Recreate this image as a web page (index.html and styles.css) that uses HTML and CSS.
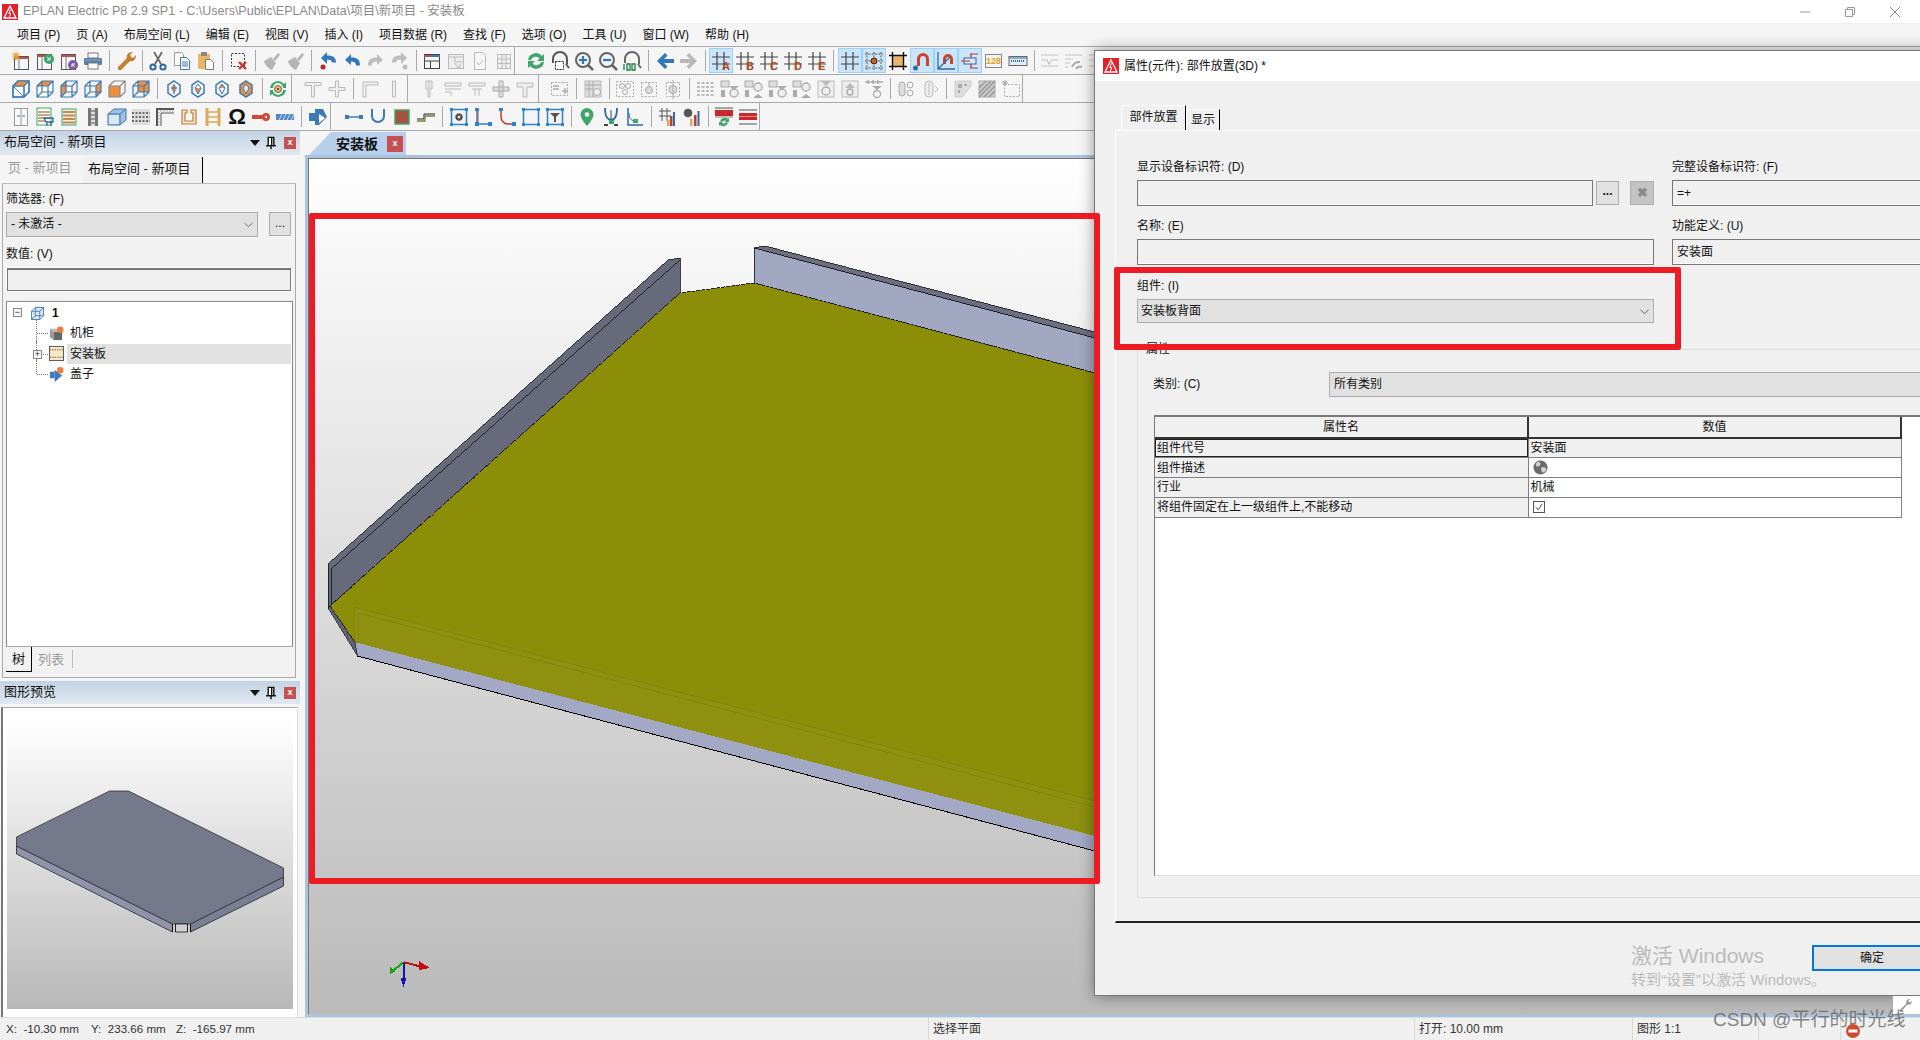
FILE: index.html
```html
<!DOCTYPE html>
<html lang="zh-CN">
<head>
<meta charset="utf-8">
<title>EPLAN Electric P8</title>
<link rel="stylesheet" href="styles.css">
</head>
<body>
<svg class="defs" aria-hidden="true">
<symbol id="eplan" viewBox="0 0 16 16"><rect width="16" height="16" fill="#e3202c"/><path d="M8 2 14 14H2Z" fill="none" stroke="#fff" stroke-width="1.3"/><path d="M8.6 5 6.8 9.5h2L7.4 13" fill="none" stroke="#fff"/></symbol>
<symbol id="nw" viewBox="0 0 20 20"><rect x="3.5" y="5.5" width="14" height="13" fill="#f4f8fc" stroke="#555"/><path d="M3 7h15" stroke="#c0504d" stroke-width="2"/><path d="M8 8v10" stroke="#777"/><path d="M5 1v8M1 5h8M2 2l6 6M8 2 2 8" stroke="#f0a030" stroke-width="1.2"/></symbol>
<symbol id="op" viewBox="0 0 20 20"><rect x="2.5" y="3.5" width="14" height="15" fill="#f4f8fc" stroke="#555"/><path d="M2 5h15" stroke="#c0504d" stroke-width="2"/><path d="M7 6v12" stroke="#777"/><circle cx="14" cy="8" r="5" fill="#3ea66b"/><path d="M12 6l3 3M15 6v3h-3" stroke="#fff" fill="none"/></symbol>
<symbol id="ps" viewBox="0 0 20 20"><rect x="2.5" y="3.5" width="14" height="15" fill="#f4f8fc" stroke="#555"/><path d="M2 5h15" stroke="#c0504d" stroke-width="2"/><path d="M7 6v12" stroke="#777"/><circle cx="14" cy="14" r="5" fill="#7d5ba6"/><path d="M16 16l-3-3M13 16v-3h3" stroke="#fff" fill="none"/></symbol>
<symbol id="pr" viewBox="0 0 20 20"><rect x="5" y="2" width="10" height="5" fill="#fff" stroke="#777"/><rect x="1" y="7" width="18" height="7" rx="1" fill="#5b7fa6"/><rect x="5" y="12" width="10" height="6" fill="#fff" stroke="#777"/><path d="M2 9h16" stroke="#89a7c8"/></symbol>
<symbol id="wr" viewBox="0 0 20 20"><path d="M2 16 11 7c-1-3 1-6 6-6l-3 3 1 2 2 1 3-3c0 5-3 7-6 6l-9 9c-2 1-4-1-3-3Z" fill="#c67f2f"/></symbol>
<symbol id="cu" viewBox="0 0 20 20"><path d="M6 1l7 12M14 1 7 13" stroke="#666" stroke-width="1.7"/><circle cx="5" cy="16" r="2.6" fill="none" stroke="#2f6aa8" stroke-width="2"/><circle cx="15" cy="16" r="2.6" fill="none" stroke="#2f6aa8" stroke-width="2"/></symbol>
<symbol id="cp" viewBox="0 0 20 20"><path d="M2.5 1.5h7l2 2v11h-9Z" fill="#fff" stroke="#999"/><path d="M8.5 6.500h6l3 3v9h-9Z" fill="#fff" stroke="#3a78b5"/><path d="M10 11h6M10 13h6M10 15h6" stroke="#3a78b5"/></symbol>
<symbol id="pa" viewBox="0 0 20 20"><rect x="2" y="3" width="12" height="15" fill="#e8b765"/><rect x="5" y="1" width="6" height="4" fill="#888"/><path d="M9.500 8.500h5l3 3v7h-8Z" fill="#fff" stroke="#777"/></symbol>
<symbol id="dl" viewBox="0 0 20 20"><rect x="2.500" y="2.500" width="13" height="13" fill="none" stroke="#333" stroke-dasharray="2 1.500"/><path d="M10 11l7 7M17 11l-7 7" stroke="#c8372b" stroke-width="2.400"/></symbol>
<symbol id="br" viewBox="0 0 20 20"><path d="M12 8 17 2l2 2-5 6ZM3 10l7-4 5 6-4 7c-3-1-7-5-8-9Z" fill="#b5b5b5"/></symbol>
<symbol id="un" viewBox="0 0 20 20"><path d="M3 9 9 3v3.500c5 0 9 1 9 8h-4c0-3-2-4-5-4V14Z" fill="#2f78bd"/></symbol>
<symbol id="und" viewBox="0 0 20 20"><path d="M3 7 9 1v3.500c5 0 9 1 9 7h-4c0-2-2-3-5-3V13Z" fill="#2f78bd"/><circle cx="5" cy="16" r="2.500" fill="#c11f2c"/></symbol>
<symbol id="re" viewBox="0 0 20 20"><path d="M17 9l-6-6v3.500c-5 0-9 1-9 8h4c0-3 2-4 5-4V14Z" fill="#bdbdbd"/></symbol>
<symbol id="red" viewBox="0 0 20 20"><path d="M17 7l-6-6v3.500c-5 0-9 1-9 7h4c0-2 2-3 5-3V13Z" fill="#bdbdbd"/><circle cx="15" cy="16" r="2.500" fill="#bdbdbd"/></symbol>
<symbol id="wl" viewBox="0 0 20 20"><rect x="2.500" y="3.500" width="15" height="14" fill="#f6f6f6" stroke="#444"/><path d="M2 5h7" stroke="#c0504d" stroke-width="2"/><path d="M9 5h9" stroke="#3a78b5" stroke-width="2"/><path d="M8.500 10v7M2 10h16" stroke="#444"/></symbol>
<symbol id="gw" viewBox="0 0 20 20"><rect x="2.500" y="3.500" width="15" height="14" fill="#eee" stroke="#bbb"/><path d="M2 6h16M9 6v5h9M8 12l6 5M14 13v4h-4" stroke="#bbb" fill="none"/></symbol>
<symbol id="gc" viewBox="0 0 20 20"><path d="M4.500 1.500h8l3 3v14h-11Z" fill="#f6f6f6" stroke="#bbb"/><path d="M7 11l2 3 4-5" stroke="#bbb" fill="none"/></symbol>
<symbol id="gt" viewBox="0 0 20 20"><rect x="3.500" y="3.500" width="13" height="14" fill="#eee" stroke="#bbb"/><path d="M3 8h13M3 12.500h13M8 4v13M12 4v13" stroke="#bbb"/></symbol>
<symbol id="rf" viewBox="0 0 20 20"><path d="M2 9a8 8 0 0 1 14-4l2-2v7h-7l2.500-2.500A5 5 0 0 0 5 9ZM18 11a8 8 0 0 1-14 4l-2 2v-7h7l-2.500 2.500A5 5 0 0 0 15 11Z" fill="#3ea66b"/></symbol>
<symbol id="zw" viewBox="0 0 20 20"><path d="M3 12V8a7 7 0 0 1 14 0v5M16 13l3 4" fill="none" stroke="#555" stroke-width="2"/><rect x="5.500" y="10.500" width="8" height="8" fill="#fff" stroke="#222" stroke-dasharray="2 1"/></symbol>
<symbol id="zp" viewBox="0 0 20 20"><circle cx="9" cy="9" r="7" fill="#eef3f8" stroke="#666" stroke-width="2"/><path d="M14 14l5 5" stroke="#666" stroke-width="2.500"/><path d="M5 9h8M9 5v8" stroke="#2f78bd" stroke-width="2.200"/></symbol>
<symbol id="zm" viewBox="0 0 20 20"><circle cx="9" cy="9" r="7" fill="#eef3f8" stroke="#666" stroke-width="2"/><path d="M14 14l5 5" stroke="#666" stroke-width="2.500"/><path d="M5 9h8" stroke="#2f78bd" stroke-width="2.200"/></symbol>
<symbol id="z1" viewBox="0 0 20 20"><path d="M3 12V8a7 7 0 0 1 14 0v5M16 13l3 4" fill="none" stroke="#666" stroke-width="2"/><path d="M2 13v6M5 13h3v6H5ZM10 13h3v6h-3Z" fill="none" stroke="#1c7c3c" stroke-width="1.300"/></symbol>
<symbol id="al" viewBox="0 0 20 20"><path d="M2 10 10 2l2.500 2.500L9 8h10v4H9l3.500 3.500L10 18Z" fill="#2f78bd"/></symbol>
<symbol id="ar" viewBox="0 0 20 20"><path d="M18 10 10 2 7.500 4.500 11 8H1v4h10l-3.500 3.500L10 18Z" fill="#b9b9b9"/></symbol>
<symbol id="gd" viewBox="0 0 20 20"><path d="M6 1v18M13 1v18M1 6h18M1 13h18" stroke="#444" stroke-width="1.200"/></symbol>
<symbol id="gdo" viewBox="0 0 20 20"><path d="M3 1v18M10 1v18M17 1v18M1 3h18M1 10h18M1 17h18" stroke="#555" stroke-dasharray="2 1.300"/><circle cx="10" cy="10" r="3" fill="#e25a15" stroke="#222"/></symbol>
<symbol id="crop" viewBox="0 0 20 20"><rect x="5" y="5" width="10" height="10" fill="#e8b765"/><path d="M4.500 1v18M15.500 1v18M1 4.500h18M1 15.500h18" stroke="#111" stroke-width="1.400"/></symbol>
<symbol id="mg1" viewBox="0 0 20 20"><path d="M5 15V8a6 6 0 0 1 12 0v7h-3V8a3 3 0 0 0-6 0v7Z" fill="#c8452a"/><circle cx="3.500" cy="17" r="2.500" fill="#2f6aa8"/></symbol>
<symbol id="mg2" viewBox="0 0 20 20"><path d="M7 13V8a5 5 0 0 1 10 0v5h-3V8a2 2 0 0 0-4 0v5Z" fill="#c8452a"/><path d="M2 1v17h17M2 18 14 6" fill="none" stroke="#2f6aa8" stroke-width="1.300"/></symbol>
<symbol id="mg3" viewBox="0 0 20 20"><rect x="4" y="7" width="12" height="6" fill="#dbe9f5" stroke="#2f6aa8"/><path d="M16 3h-5v4M16 17h-5v-4M10 10H1M18 3v0M10 3h8M10 17h8" fill="none" stroke="#b3362c" stroke-width="1.200"/></symbol>
<symbol id="rl" viewBox="0 0 20 20"><rect x="1" y="5.500" width="18" height="9" fill="#e4eefa" stroke="#666"/><path d="M3 10h14" stroke="#2f6aa8" stroke-width="2" stroke-dasharray="1 1"/><path d="M1 7h18" stroke="#2f6aa8"/></symbol>
<symbol id="lg1" viewBox="0 0 20 20"><path d="M1 4h17M1 15h17M1 9h6l2 4 3-4h6" fill="none" stroke="#c4c4c4" stroke-width="1.200"/></symbol>
<symbol id="lg2" viewBox="0 0 20 20"><path d="M1 4h17M1 8h8M1 12h5M1 16h3" stroke="#c4c4c4" stroke-width="1.200"/><path d="M8 16a8 8 0 0 1 8-5M12 18a5 5 0 0 1 6-2" fill="none" stroke="#aaa" stroke-width="2"/></symbol>
<symbol id="c1" viewBox="0 0 20 20"><path d="M2 7 7 2h11v11l-5 5H2Z" fill="#fff" stroke="#3d7ab8" stroke-width="1.300"/><path d="M2 7h11v11ZM13 7l5-5" fill="none" stroke="#3d7ab8"/><path d="M2 7 7 2h11l-5 5Z" fill="#ef8f3e"/><path d="M2 7 7 2h11v11l-5 5H2ZM2 7h11v11M13 7l5-5" fill="none" stroke="#3d7ab8" stroke-width="1.200"/></symbol>
<symbol id="c2" viewBox="0 0 20 20"><path d="M2 7h11v11H2Z" fill="#dbe9f5"/><path d="M7 2h11v11H7Z" fill="#dbe9f5"/><path d="M2 7 7 2h11v11l-5 5H2ZM2 7h11v11M13 7l5-5M7 2v11h11M7 13l-5 5" fill="none" stroke="#3d7ab8" stroke-width="1.200"/></symbol>
<symbol id="c2o" viewBox="0 0 20 20"><path d="M2 7h11v11H2Z" fill="#fff"/><path d="M7 2h11v11H7Z" fill="#fff"/><path d="M7 2h11l-5 5H2Z" fill="#ef8f3e"/><path d="M2 7 7 2h11v11l-5 5H2ZM2 7h11v11M13 7l5-5M7 2v11h11M7 13l-5 5" fill="none" stroke="#3d7ab8" stroke-width="1.200"/></symbol>
<symbol id="c3" viewBox="0 0 20 20"><path d="M2 7 7 2v11l-5 5Z" fill="#ef8f3e"/><path d="M2 7 7 2h11v11l-5 5H2ZM2 7h11v11M13 7l5-5M7 2v11h11M7 13l-5 5" fill="none" stroke="#3d7ab8" stroke-width="1.200"/></symbol>
<symbol id="c4" viewBox="0 0 20 20"><path d="M13 7l5-5v11l-5 5Z" fill="#ef8f3e"/><path d="M2 7 7 2h11v11l-5 5H2ZM2 7h11v11M13 7l5-5M7 2v11h11M7 13l-5 5" fill="none" stroke="#3d7ab8" stroke-width="1.200"/></symbol>
<symbol id="c5" viewBox="0 0 20 20"><path d="M2 7h11v11H2Z" fill="#ef8f3e"/><path d="M2 7 7 2h11v11l-5 5H2ZM2 7h11v11M13 7l5-5" fill="none" stroke="#888" stroke-width="1.200"/></symbol>
<symbol id="c6" viewBox="0 0 20 20"><path d="M7 2h11v11H7Z" fill="#ef8f3e"/><path d="M2 7 7 2h11v11l-5 5H2ZM2 7h11v11M13 7l5-5M7 2v11h11M7 13l-5 5" fill="none" stroke="#3d7ab8" stroke-width="1.200"/></symbol>
<symbol id="h1" viewBox="0 0 20 20"><path d="M10 2l6 4v8l-6 4-6-4V6Z" fill="#f0f5fa" stroke="#3d7ab8" stroke-width="1.500"/><path d="M10 5l3 4-3 6-3-6Z" fill="#ef8f3e"/><path d="M7 9h6M10 5v10" stroke="#3d7ab8"/></symbol>
<symbol id="h2" viewBox="0 0 20 20"><path d="M10 2l6 4v8l-6 4-6-4V6Z" fill="#f0f5fa" stroke="#3d7ab8" stroke-width="1.500"/><path d="M7 9h6l-3 6Z" fill="#ef8f3e"/><path d="M10 5l3 4-3 6-3-6Z" fill="none" stroke="#3d7ab8"/></symbol>
<symbol id="h3" viewBox="0 0 20 20"><path d="M10 2l6 4v8l-6 4-6-4V6Z" fill="#f0f5fa" stroke="#3d7ab8" stroke-width="1.500"/><path d="M10 5l3 4h-6Z" fill="#ef8f3e"/><path d="M10 5l3 4-3 6-3-6Z" fill="none" stroke="#3d7ab8"/></symbol>
<symbol id="h4" viewBox="0 0 20 20"><path d="M10 2l6 4v8l-6 4-6-4V6Z" fill="#ef8f3e" stroke="#3d7ab8" stroke-width="1.500"/><path d="M10 5l3 4-3 6-3-6Z" fill="#dbe9f5" stroke="#3d7ab8"/></symbol>
<symbol id="rfe" viewBox="0 0 20 20"><path d="M2 9a8 8 0 0 1 14-4l2-2v6h-3a5 5 0 0 0-10 0ZM18 11a8 8 0 0 1-14 4l-2 2v-6h3a5 5 0 0 0 10 0Z" fill="#3ea66b"/><circle cx="10" cy="10" r="3.500" fill="#e8b765" stroke="#666"/><circle cx="10" cy="10" r="1" fill="#333"/></symbol>
<symbol id="gT" viewBox="0 0 20 20"><path d="M2 3.500h16v3h-6.500V18h-3V6.500H2Z" fill="#eee" stroke="#bbb"/></symbol>
<symbol id="gP" viewBox="0 0 20 20"><path d="M8.500 2h3v6.500H18v3h-6.500V18h-3v-6.500H2v-3h6.500Z" fill="#eee" stroke="#bbb"/></symbol>
<symbol id="gL" viewBox="0 0 20 20"><path d="M3 18V3h15v3H6v12Z" fill="#eee" stroke="#bbb"/></symbol>
<symbol id="gI" viewBox="0 0 20 20"><path d="M8.500 2h3v16h-3Z" fill="#eee" stroke="#bbb"/></symbol>
<symbol id="gY" viewBox="0 0 20 20"><path d="M7 2h6v8h-2v8H9v-8H7ZM10 2v8" fill="#eee" stroke="#bbb"/></symbol>
<symbol id="gE" viewBox="0 0 20 20"><path d="M2 4h16v3H2ZM2 10h16" fill="#eee" stroke="#bbb"/><path d="M2 13h6v4" fill="none" stroke="#bbb"/></symbol>
<symbol id="gF" viewBox="0 0 20 20"><path d="M2 4h16v3H2ZM5 10h10M8 10v7M12 10v7" fill="#eee" stroke="#bbb"/></symbol>
<symbol id="gH" viewBox="0 0 20 20"><path d="M2 8h16v4H2ZM8 2h4v16H8Z" fill="#ddd" stroke="#aaa"/></symbol>
<symbol id="gU" viewBox="0 0 20 20"><path d="M2 4h16v4h-6v10H8V8H2Z" fill="#eee" stroke="#bbb"/></symbol>
<symbol id="dA" viewBox="0 0 20 20"><rect x="1.500" y="3.500" width="16" height="13" fill="none" stroke="#aaa" stroke-dasharray="2 1.500"/><path d="M3 7h6M3 10h6M12 12h6M15 9v6" stroke="#aaa" stroke-width="1.500"/></symbol>
<symbol id="dB" viewBox="0 0 20 20"><rect x="2" y="2" width="16" height="16" fill="#ddd" stroke="#bbb"/><path d="M2 6h16M6 2v16M10 2v16M2 10h8" stroke="#aaa"/><circle cx="14" cy="13" r="3.500" fill="#eee" stroke="#aaa"/></symbol>
<symbol id="dC" viewBox="0 0 20 20"><rect x="1.500" y="2.500" width="17" height="15" fill="none" stroke="#aaa" stroke-dasharray="2 1.500"/><circle cx="7" cy="7" r="2.500" fill="none" stroke="#aaa"/><circle cx="13" cy="7" r="2.500" fill="none" stroke="#aaa"/><circle cx="10" cy="13" r="2.500" fill="none" stroke="#aaa"/></symbol>
<symbol id="dD" viewBox="0 0 20 20"><rect x="2.500" y="3.500" width="15" height="14" fill="none" stroke="#aaa" stroke-dasharray="2 1.500"/><circle cx="10" cy="11" r="3.500" fill="#ddd" stroke="#aaa"/><path d="M10 3v4" stroke="#aaa"/></symbol>
<symbol id="dE" viewBox="0 0 20 20"><rect x="3.500" y="3.500" width="13" height="14" fill="none" stroke="#aaa" stroke-dasharray="2 1.500"/><circle cx="10" cy="10.500" r="4" fill="#ddd" stroke="#aaa"/><path d="M10 1v19" stroke="#aaa"/></symbol>
<symbol id="eA" viewBox="0 0 20 20"><path d="M1 4h18M1 16h18M1 8h18M1 12h18" stroke="#aaa" stroke-dasharray="3 1.500" stroke-width="1.500"/></symbol>
<symbol id="eB" viewBox="0 0 20 20"><rect x="1" y="2" width="8" height="6" fill="#ddd" stroke="#aaa"/><path d="M9 7h10l-5 4ZM1 11h4v7H1Z" fill="#aaa"/><circle cx="14" cy="14" r="4" fill="#eee" stroke="#aaa" stroke-width="1.300"/></symbol>
<symbol id="eC" viewBox="0 0 20 20"><rect x="1" y="2" width="8" height="6" fill="#ddd" stroke="#aaa"/><path d="M1 11h4v7H1ZM9 19l5-4 5 4Z" fill="#aaa"/><circle cx="14" cy="8" r="4" fill="#eee" stroke="#aaa" stroke-width="1.300"/></symbol>
<symbol id="eD" viewBox="0 0 20 20"><rect x="2" y="2" width="16" height="16" fill="#eee" stroke="#bbb"/><path d="M5 2l5 5 5-5Z" fill="#bbb"/><circle cx="10" cy="12" r="4" fill="none" stroke="#aaa" stroke-width="1.300"/></symbol>
<symbol id="eE" viewBox="0 0 20 20"><rect x="2" y="2" width="16" height="16" fill="#eee" stroke="#bbb"/><path d="M5 9l5-5 5 5Z" fill="#bbb"/><circle cx="10" cy="13" r="3" fill="none" stroke="#aaa" stroke-width="1.300"/></symbol>
<symbol id="eF" viewBox="0 0 20 20"><path d="M1 3h18M4 1v4M9 1v4M14 1v4" stroke="#aaa" stroke-width="1.500"/><path d="M8 7h10l-5 4Z" fill="#aaa"/><circle cx="13" cy="15" r="3.500" fill="none" stroke="#aaa" stroke-width="1.300"/></symbol>
<symbol id="fA" viewBox="0 0 20 20"><rect x="3" y="3" width="6" height="14" rx="3" fill="#ddd" stroke="#aaa"/><circle cx="14" cy="6" r="3" fill="none" stroke="#aaa"/><circle cx="14" cy="14" r="3" fill="none" stroke="#aaa"/></symbol>
<symbol id="fB" viewBox="0 0 20 20"><rect x="5" y="2" width="8" height="16" rx="4" fill="#eee" stroke="#bbb"/><path d="M9 4v12M15 7l3 3-3 3" fill="none" stroke="#bbb"/></symbol>
<symbol id="sA" viewBox="0 0 20 20"><path d="M2 2h16v5l-9 11H2Z" fill="#ddd" stroke="#ccc"/><path d="M5 5h4v4H5ZM11 5h3v2h-3ZM5 11h2v3H5Z" fill="#aaa"/></symbol>
<symbol id="sB" viewBox="0 0 20 20"><rect x="2" y="2" width="16" height="16" fill="#ccc" stroke="#aaa"/><path d="M2 9l7-7M2 14 14 2M2 18 18 2M7 18 18 7M12 18l6-6" stroke="#999" stroke-width="1.500"/></symbol>
<symbol id="sC" viewBox="0 0 20 20"><rect x="3.500" y="5.500" width="15" height="12" fill="none" stroke="#aaa" stroke-dasharray="2 1.500"/><path d="M4 1v6M1 4h6M2 2l4 4M6 2 2 6" stroke="#aaa"/></symbol>
<symbol id="ca" viewBox="0 0 20 20"><rect x="3.500" y="1.500" width="13" height="17" fill="#f8f8f8" stroke="#999"/><path d="M10 2v16" stroke="#999"/><path d="M6 9h3M11 9h3" stroke="#2f6aa8"/></symbol>
<symbol id="rc" viewBox="0 0 20 20"><rect x="2" y="1" width="14" height="17" fill="#fff" stroke="#3ea66b"/><path d="M3 5h12M3 8h12M3 11h12M3 14h7" stroke="#b48a57" stroke-width="1.500"/><path d="M9 11h9v4h-7ZM12 15v4M16 15v4" fill="none" stroke="#2f6aa8" stroke-width="1.300"/></symbol>
<symbol id="ro" viewBox="0 0 20 20"><rect x="3" y="2" width="14" height="16" fill="#eee" stroke="#3ea66b"/><path d="M4 5h12M4 8.500h12M4 12h12M4 15.500h12" stroke="#c8894a" stroke-width="1.800"/></symbol>
<symbol id="rr" viewBox="0 0 20 20"><rect x="5" y="1" width="10" height="18" fill="#777"/><rect x="8" y="1" width="4" height="18" fill="#ddd"/><path d="M8 4h4M8 8h4M8 12h4M8 16h4" stroke="#555"/></symbol>
<symbol id="b3" viewBox="0 0 20 20"><path d="M1 7l6-5h12v11l-6 5H1Z" fill="#9fc0e0" stroke="#3d7ab8"/><path d="M1 7h12v11M13 7l6-5" fill="none" stroke="#3d7ab8"/><path d="M2 8h10v9H2Z" fill="#dbe9f5"/></symbol>
<symbol id="dg" viewBox="0 0 20 20"><rect x="1" y="2" width="18" height="16" fill="#ddd"/><path d="M1 6h18M1 10h18M1 14h18" stroke="#444" stroke-width="1.500" stroke-dasharray="2 1.500"/></symbol>
<symbol id="cn" viewBox="0 0 20 20"><path d="M2 19V2h17" fill="none" stroke="#555" stroke-width="2"/><path d="M6 19V6h13" fill="none" stroke="#555" stroke-width="1"/><path d="M4 5v14M5 4h14" stroke="#999" stroke-dasharray="1.500 1.500"/></symbol>
<symbol id="uo" viewBox="0 0 20 20"><path d="M3 3h5v3H6v8h8V6h-2V3h5v14H3Z" fill="#f2e3cc" stroke="#b5803f" stroke-width="1.200"/></symbol>
<symbol id="ld" viewBox="0 0 20 20"><path d="M4 1v18M16 1v18" stroke="#dcab58" stroke-width="3"/><path d="M5 5h10M5 10h10M5 15h10" stroke="#dcab58" stroke-width="1.500"/></symbol>
<symbol id="pn" viewBox="0 0 20 20"><path d="M1 8h11v4H1Z" fill="#d04a2f"/><circle cx="15" cy="10" r="4" fill="#d04a2f"/><circle cx="15" cy="10" r="1.200" fill="#fff"/></symbol>
<symbol id="br2" viewBox="0 0 20 20"><rect x="1" y="7" width="18" height="6" fill="#4f8ac7"/><path d="M4 13l3-6M8 13l3-6M12 13l3-6M16 13l3-6" stroke="#cfe0f2"/></symbol>
<symbol id="bs" viewBox="0 0 20 20"><path d="M1 6h6v8H1Z" fill="#3d7ab8"/><path d="M7 2h8l4 8-8 8H7Z" fill="#3d7ab8"/><path d="M11 7l6 4-6 5Z" fill="#fff"/></symbol>
<symbol id="ln" viewBox="0 0 20 20"><path d="M3 10h14" stroke="#3d7ab8" stroke-width="1.500"/><rect x="1" y="8" width="4" height="4" fill="#3d7ab8"/><rect x="15" y="8" width="4" height="4" fill="#3d7ab8"/></symbol>
<symbol id="uu" viewBox="0 0 20 20"><path d="M4 2v7a6 6 0 0 0 12 0V2" fill="none" stroke="#3d7ab8" stroke-width="2"/></symbol>
<symbol id="sq" viewBox="0 0 20 20"><rect x="3" y="3" width="14" height="14" fill="#a8513f" stroke="#3ea66b" stroke-width="1.500"/></symbol>
<symbol id="zz" viewBox="0 0 20 20"><path d="M1 12h7V7h11" fill="none" stroke="#222"/><path d="M1 14h8V9h10" fill="none" stroke="#79803a" stroke-width="1.300"/></symbol>
<symbol id="fg" viewBox="0 0 20 20"><rect x="2.500" y="2.500" width="15" height="15" fill="#f2f2f2" stroke="#2f82cc" stroke-width="1.500"/><path d="M1 1h3v3H1ZM16 1h3v3h-3ZM1 16h3v3H1ZM16 16h3v3h-3Z" fill="#2f82cc"/><circle cx="10" cy="10" r="3.500" fill="#555" stroke="#555" stroke-dasharray="1 1"/><circle cx="10" cy="10" r="1.200" fill="#f2f2f2"/></symbol>
<symbol id="fL" viewBox="0 0 20 20"><path d="M4 2v15h14" fill="none" stroke="#2f82cc" stroke-width="1.500"/><path d="M5 2v14" stroke="#c8372b"/><path d="M2 1h4v3H2ZM2 15h4v4H2ZM15 15h4v4h-4Z" fill="#2f82cc"/></symbol>
<symbol id="fC" viewBox="0 0 20 20"><path d="M4 2v8a7 7 0 0 0 7 7h7" fill="none" stroke="#c8372b" stroke-width="1.500"/><path d="M2 1h4v3H2ZM15 15h4v4h-4Z" fill="#2f82cc"/></symbol>
<symbol id="fR" viewBox="0 0 20 20"><rect x="2.500" y="2.500" width="15" height="15" fill="none" stroke="#2f82cc" stroke-width="1.500"/><path d="M1 1h3v3H1ZM16 1h3v3h-3ZM1 16h3v3H1ZM16 16h3v3h-3Z" fill="#2f82cc"/></symbol>
<symbol id="fF" viewBox="0 0 20 20"><rect x="2.500" y="2.500" width="15" height="15" fill="#f2f2f2" stroke="#2f82cc" stroke-width="1.500"/><path d="M1 1h3v3H1ZM16 1h3v3h-3ZM1 16h3v3H1ZM16 16h3v3h-3Z" fill="#2f82cc"/><path d="M5 6h10l-4 4v5H9v-5Z" fill="#555"/></symbol>
<symbol id="gp" viewBox="0 0 20 20"><path d="M10 1a6.500 6.500 0 0 1 6.500 6.500C16.500 12 10 19 10 19S3.500 12 3.500 7.500A6.500 6.500 0 0 1 10 1Z" fill="#3ea66b"/><circle cx="10" cy="7.500" r="2.300" fill="#fff"/></symbol>
<symbol id="vv" viewBox="0 0 20 20"><path d="M4 1c0 9 3 12 6 12s6-3 6-12" fill="none" stroke="#2f6aa8" stroke-width="1.800"/><path d="M10 3v9" stroke="#444"/><path d="M3 18h4M13 18h4" stroke="#444" stroke-width="2"/><rect x="8" y="13" width="5" height="4" fill="#3ea66b"/></symbol>
<symbol id="ll" viewBox="0 0 20 20"><path d="M3 1v17h15" fill="none" stroke="#2f6aa8" stroke-width="1.500"/><path d="M4 6c0 6 3 8 6 8" fill="none" stroke="#2f6aa8"/><rect x="8" y="12" width="5" height="4" fill="#3ea66b"/></symbol>
<symbol id="gb" viewBox="0 0 20 20"><path d="M4 1v13M9 1v13M1 4h12M1 9h12" stroke="#555"/><path d="M12 19V9h2.500v10Z" fill="#c8372b"/><path d="M15 19V5h2v14Z" fill="#2f6aa8"/><path d="M9 19v-6h2.500v6Z" fill="#dcab58"/></symbol>
<symbol id="gG" viewBox="0 0 20 20"><circle cx="6" cy="6" r="4" fill="#555" stroke="#555" stroke-dasharray="1 1"/><path d="M12 19V8h2.500v11Z" fill="#c8372b"/><path d="M15.500 19V4h2v15Z" fill="#2f6aa8"/><path d="M8 19v-7h2.500v7Z" fill="#dcab58"/></symbol>
<symbol id="rb" viewBox="0 0 20 20"><path d="M1 1h18" stroke="#555"/><path d="M1 3h18v6H1Z" fill="#c8272c"/><path d="M1 10h18" stroke="#888"/><path d="M6 14a5 5 0 0 1 8-2l1-1v4h-4l1-1a3 3 0 0 0-4 1ZM14 16a5 5 0 0 1-8 2l-1 1v-4h4l-1 1a3 3 0 0 0 4-1Z" fill="#3ea66b"/></symbol>
<symbol id="rc2" viewBox="0 0 20 20"><path d="M1 3h18M1 17h18" stroke="#555" stroke-width="1.200"/><path d="M1 6h18v7H1Z" fill="#c8272c"/><path d="M1 9.500h18" stroke="#e88"/></symbol>
<symbol id="pl" viewBox="0 0 20 20"><path d="M6 2h8v12H6ZM3 14h14M10 14v5M11 3v10" fill="#fff" stroke="#111" stroke-width="2"/></symbol>
<symbol id="globe" viewBox="0 0 16 16"><circle cx="8" cy="8" r="7.500" fill="#6c6c6c"/><path d="M5 2c3 0 4 2 2 4S3 7 3 4ZM9 8c3-1 5 0 5 2s-3 4-4 3-2-4-1-5Z" fill="#d4d4d4"/></symbol>
</svg>

<div class="app">
  <header class="titlebar">
    <svg class="title-icon"><use href="#eplan"/></svg>
    <span class="title-text">EPLAN Electric P8 2.9 SP1 - C:\Users\Public\EPLAN\Data\项目\新项目 - 安装板</span>
    <div class="win-btns">
      <span class="win-btn"><svg viewBox="0 0 10 10"><path d="M0 5h10" stroke="#999"/></svg></span>
      <span class="win-btn"><svg viewBox="0 0 10 10"><path d="M.5 2.500h7v7h-7ZM2.500 2.500v-2h7v7h-2" fill="none" stroke="#999"/></svg></span>
      <span class="win-btn"><svg viewBox="0 0 10 10"><path d="M0 0l10 10M10 0 0 10" stroke="#888"/></svg></span>
    </div>
  </header>
  <nav class="menubar">
    <span>项目 (P)</span><span>页 (A)</span><span>布局空间 (L)</span><span>编辑 (E)</span><span>视图 (V)</span><span>插入 (I)</span><span>项目数据 (R)</span><span>查找 (F)</span><span>选项 (O)</span><span>工具 (U)</span><span>窗口 (W)</span><span>帮助 (H)</span>
  </nav>
  <div class="toolbars">
    <div class="tbrow">
      <div class="tbg first">
        <i class="b"><svg><use href="#nw"/></svg></i><i class="b"><svg><use href="#op"/></svg></i><i class="b"><svg><use href="#ps"/></svg></i><i class="b"><svg><use href="#pr"/></svg></i><u class="s"></u>
        <i class="b"><svg><use href="#wr"/></svg></i><u class="s"></u>
        <i class="b"><svg><use href="#cu"/></svg></i><i class="b"><svg><use href="#cp"/></svg></i><i class="b"><svg><use href="#pa"/></svg></i><u class="s"></u>
        <i class="b"><svg><use href="#dl"/></svg></i><u class="s"></u>
        <i class="b"><svg><use href="#br"/></svg></i><i class="b"><svg><use href="#br"/></svg></i><u class="s"></u>
        <i class="b"><svg><use href="#und"/></svg></i><i class="b"><svg><use href="#un"/></svg></i><i class="b"><svg><use href="#re"/></svg></i><i class="b"><svg><use href="#red"/></svg></i><u class="s"></u>
        <i class="b"><svg><use href="#wl"/></svg></i><i class="b"><svg><use href="#gw"/></svg></i><i class="b"><svg><use href="#gc"/></svg></i><i class="b"><svg><use href="#gt"/></svg></i>
      </div>
      <div class="tbg last">
        <i class="b"><svg><use href="#rf"/></svg></i><i class="b"><svg><use href="#zw"/></svg></i><i class="b"><svg><use href="#zp"/></svg></i><i class="b"><svg><use href="#zm"/></svg></i><i class="b"><svg><use href="#z1"/></svg></i><u class="s"></u>
        <i class="b"><svg><use href="#al"/></svg></i><i class="b"><svg><use href="#ar"/></svg></i><u class="s"></u>
        <i class="b on"><svg><use href="#gd"/><text x="11" y="19" class="gl">A</text></svg></i><i class="b"><svg><use href="#gd"/><text x="11" y="19" class="gl">B</text></svg></i><i class="b"><svg><use href="#gd"/><text x="11" y="19" class="gl">C</text></svg></i><i class="b"><svg><use href="#gd"/><text x="11" y="19" class="gl">D</text></svg></i><i class="b"><svg><use href="#gd"/><text x="11" y="19" class="gl">E</text></svg></i><u class="s"></u>
        <i class="b on"><svg><use href="#gd"/></svg></i><i class="b on"><svg><use href="#gdo"/></svg></i><i class="b"><svg><use href="#crop"/></svg></i>
        <i class="b on"><svg><use href="#mg1"/></svg></i><i class="b on"><svg><use href="#mg2"/></svg></i><i class="b on"><svg><use href="#mg3"/></svg></i>
        <i class="b"><em class="n128">128</em></i><i class="b"><svg><use href="#rl"/></svg></i><u class="s"></u>
        <i class="b"><svg><use href="#lg1"/></svg></i><i class="b"><svg><use href="#lg2"/></svg></i><i class="b"><svg><use href="#lg1"/></svg></i>
      </div>
    </div>
    <div class="tbrow">
      <div class="tbg first w292">
        <i class="b"><svg><use href="#c1"/></svg></i><i class="b"><svg><use href="#c2o"/></svg></i><i class="b"><svg><use href="#c3"/></svg></i><i class="b"><svg><use href="#c4"/></svg></i><i class="b"><svg><use href="#c5"/></svg></i><i class="b"><svg><use href="#c6"/></svg></i><u class="s"></u>
        <i class="b"><svg><use href="#h1"/></svg></i><i class="b"><svg><use href="#h2"/></svg></i><i class="b"><svg><use href="#h3"/></svg></i><i class="b"><svg><use href="#h4"/></svg></i><u class="s"></u>
        <i class="b"><svg><use href="#rfe"/></svg></i>
      </div>
      <div class="tbg w116">
        <i class="b"><svg><use href="#gT"/></svg></i><i class="b"><svg><use href="#gP"/></svg></i><u class="s"></u><i class="b"><svg><use href="#gL"/></svg></i><i class="b"><svg><use href="#gI"/></svg></i>
      </div>
      <div class="tbg w131">
        <i class="b"><svg><use href="#gY"/></svg></i><i class="b"><svg><use href="#gE"/></svg></i><i class="b"><svg><use href="#gF"/></svg></i><i class="b"><svg><use href="#gH"/></svg></i><i class="b"><svg><use href="#gU"/></svg></i>
      </div>
      <div class="tbg w484">
        <i class="b"><svg><use href="#dA"/></svg></i><u class="s"></u><i class="b"><svg><use href="#dB"/></svg></i><u class="s"></u>
        <i class="b"><svg><use href="#dC"/></svg></i><i class="b"><svg><use href="#dD"/></svg></i><i class="b"><svg><use href="#dE"/></svg></i><u class="s"></u>
        <i class="b"><svg><use href="#eA"/></svg></i><i class="b"><svg><use href="#eB"/></svg></i><i class="b"><svg><use href="#eC"/></svg></i><i class="b"><svg><use href="#eB"/></svg></i><i class="b"><svg><use href="#eC"/></svg></i><i class="b"><svg><use href="#eD"/></svg></i><i class="b"><svg><use href="#eE"/></svg></i><i class="b"><svg><use href="#eF"/></svg></i><u class="s"></u>
        <i class="b"><svg><use href="#fA"/></svg></i><i class="b"><svg><use href="#fB"/></svg></i><u class="s"></u>
        <i class="b"><svg><use href="#sA"/></svg></i><i class="b"><svg><use href="#sB"/></svg></i><i class="b"><svg><use href="#sC"/></svg></i>
      </div>
    </div>
    <div class="tbrow">
      <div class="tbg first w331">
        <i class="b"><svg><use href="#ca"/></svg></i><i class="b"><svg><use href="#rc"/></svg></i><i class="b"><svg><use href="#ro"/></svg></i><i class="b"><svg><use href="#rr"/></svg></i><i class="b"><svg><use href="#b3"/></svg></i><i class="b"><svg><use href="#dg"/></svg></i><i class="b"><svg><use href="#cn"/></svg></i><i class="b"><svg><use href="#uo"/></svg></i><i class="b"><svg><use href="#ld"/></svg></i><i class="b omega">Ω</i><i class="b"><svg><use href="#pn"/></svg></i><i class="b"><svg><use href="#br2"/></svg></i><u class="s"></u>
        <i class="b"><svg><use href="#bs"/></svg></i>
      </div>
      <div class="tbg w429">
        <i class="b"><svg><use href="#ln"/></svg></i><i class="b"><svg><use href="#uu"/></svg></i><i class="b"><svg><use href="#sq"/></svg></i><i class="b"><svg><use href="#zz"/></svg></i><u class="s"></u>
        <i class="b"><svg><use href="#fg"/></svg></i><i class="b"><svg><use href="#fL"/></svg></i><i class="b"><svg><use href="#fC"/></svg></i><i class="b"><svg><use href="#fR"/></svg></i><i class="b"><svg><use href="#fF"/></svg></i><u class="s"></u>
        <i class="b"><svg><use href="#gp"/></svg></i><i class="b"><svg><use href="#vv"/></svg></i><i class="b"><svg><use href="#ll"/></svg></i><u class="s"></u>
        <i class="b"><svg><use href="#gb"/></svg></i><i class="b"><svg><use href="#gG"/></svg></i><u class="s"></u>
        <i class="b"><svg><use href="#rb"/></svg></i><i class="b"><svg><use href="#rc2"/></svg></i>
      </div>
    </div>
  </div>

  <main class="workspace">
    <aside class="sidebar">
      <div class="caption">
        <span class="cap-title">布局空间 - 新项目</span>
        <b class="cap-arrow"></b><svg class="cap-pin"><use href="#pl"/></svg><b class="cap-close">x</b>
      </div>
      <div class="side-tabs">
        <span class="side-tab dim">页 - 新项目</span>
        <span class="side-tab cur">布局空间 - 新项目</span>
      </div>
      <div class="side-body">
        <label class="lbl">筛选器: (F)</label>
        <div class="filter-row">
          <div class="combo">- 未激活 -<svg class="chev" viewBox="0 0 10 6"><path d="M.5.500 5 5 9.500.5" fill="none" stroke="#666"/></svg></div>
          <div class="dots">...</div>
        </div>
        <label class="lbl val">数值: (V)</label>
        <div class="value-input"></div>
        <div class="tree">
          <div class="node root"><span class="exp">−</span><svg class="ticon"><use href="#c2"/></svg><b>1</b></div>
          <div class="node"><span class="conn"></span><svg class="ticon" viewBox="0 0 16 16"><path d="M1 3l4 3v9L1 12Z" fill="#999"/><path d="M5 6h9v9H5Z" fill="#666"/><path d="M1 3h8l3 3H5Z" fill="#bbb"/><circle cx="12" cy="4" r="3.500" fill="#ee7d3b"/></svg><span>机柜</span></div>
          <div class="node sel"><span class="conn"></span><span class="exp sub">+</span><svg class="ticon" viewBox="0 0 16 16"><rect x=".5" y=".5" width="15" height="15" fill="#f7e7c9" stroke="#555"/><path d="M1 4h14M1 12h14" stroke="#8a5a2a" stroke-dasharray="1.500 1" /></svg><span class="sel-text">安装板</span></div>
          <div class="node"><span class="conn end"></span><svg class="ticon" viewBox="0 0 16 16"><path d="M1 5h5v7H1Z" fill="#3d7ab8"/><path d="M6 3l8 6-8 7Z" fill="#3d7ab8"/><circle cx="12" cy="3.500" r="3.500" fill="#ee7d3b"/></svg><span>盖子</span></div>
        </div>
        <div class="bottom-tabs"><span class="btab cur">树</span><span class="btab dim">列表</span></div>
      </div>
      <div class="caption second">
        <span class="cap-title">图形预览</span>
        <b class="cap-arrow"></b><svg class="cap-pin"><use href="#pl"/></svg><b class="cap-close">x</b>
      </div>
      <div class="preview">
        <div class="preview-view">
          <svg class="fill-svg" viewBox="7 713 285 297">
            <path d="M16 847 172 925V933L16 855Z" fill="#8f93ac" stroke="#222" stroke-width=".8"/>
            <path d="M190 925 283 878V887L190 933Z" fill="#7b7f96" stroke="#222" stroke-width=".8"/>
            <path d="M109 792H128L283 869V878L190 925H172L16 847V838Z" fill="#75798c" stroke="#333" stroke-width=".8"/>
            <path d="M172 925V933M175 925V933M187 925V933M190 925V933" stroke="#111"/>
            <path d="M175 933V925H187V933Z" fill="#cfcfcf" stroke="#111" stroke-width=".8"/>
          </svg>
        </div>
      </div>
    </aside>

    <section class="doc">
      <div class="doc-tabs">
        <div class="doc-tab"><span>安装板</span><b>x</b></div>
      </div>
      <div class="canvas">
        <svg class="canvas-svg" viewBox="308 158 1612 856" preserveAspectRatio="none">
          <path d="M668 260 680 258V293L331 605 328 608V564Z" fill="#666a7b" stroke="#111" stroke-width=".8"/>
          <path d="M680 260 331 569V605" fill="none" stroke="#111" stroke-width=".8"/>
          <path d="M754 248 765 246 1095 332V338Z" fill="#6b6f80" stroke="#111" stroke-width=".8"/>
          <path d="M754 248 1095 338V373L754 283Z" fill="#a2a7c2" stroke="#111" stroke-width=".8"/>
          <path d="M355 642 357.500 656 1095 851V836Z" fill="#a3a8c4"/>
          <path d="M357.500 656 1095 851" stroke="#000" fill="none"/>
          <path d="M330 606 328 608 357.500 656 355 642Z" fill="#5e6272" stroke="#111" stroke-width=".6"/>
          <path d="M680 293 754 283 1095 373V836L355 642 330 606Z" fill="#8d8e08"/>
          <path d="M354 607V642L1095 836V801Z" fill="#8f9010"/>
          <path d="M354 607 1095 801M358.600 613 1095 807M354 607V642M358.600 613V643" stroke="#83830f" fill="none"/>
          <path d="M355 642 330 606 680 293 754 283 1095 373" fill="none" stroke="#111" stroke-width=".9" stroke-dasharray="4 1"/>
          <path d="M403.500 962V980" stroke="#1414b4" stroke-width="2"/><path d="M400.500 978h6L403.500 987Z" fill="#1414b4"/>
          <path d="M403.500 962 422 967" stroke="#c40d0d" stroke-width="2"/><path d="M419 961 430 968 419 970Z" fill="#c40d0d"/>
          <path d="M403.500 962 394 970" stroke="#0ca80c" stroke-width="2"/><path d="M390 967 396 971 390 974Z" fill="#0ca80c"/>
        </svg>
      </div>
    </section>
  </main>

  <footer class="statusbar">
    <div class="st st-coord"><span class="co">X:&nbsp; -10.30 mm</span><span class="co">Y:&nbsp; 233.66 mm</span><span>Z:&nbsp; -165.97 mm</span></div>
    <div class="st st-a">选择平面</div>
    <div class="st st-b">打开: 10.00 mm</div>
    <div class="st st-c">图形 1:1</div>
    <div class="st st-d"></div>
    <div class="st st-e"></div>
  </footer>

  <section class="dialog">
    <div class="dlg-title"><svg class="dlg-icon"><use href="#eplan"/></svg><span>属性(元件): 部件放置(3D) *</span></div>
    <div class="dlg-body">
      <div class="dlg-tabs"><span class="dtab cur">部件放置</span><span class="dtab">显示</span></div>
      <div class="dlg-page">
        <div class="form">
          <div class="fld">
            <label class="lbl">显示设备标识符: (D)</label>
            <div class="with-btn"><div class="inp grow"></div><span class="mini">...</span><span class="mini x">✖</span></div>
          </div>
          <div class="fld"><label class="lbl">完整设备标识符: (F)</label><div class="inp">=+</div></div>
          <div class="fld"><label class="lbl">名称: (E)</label><div class="inp"></div></div>
          <div class="fld"><label class="lbl">功能定义: (U)</label><div class="inp">安装面</div></div>
          <div class="fld third"><label class="lbl">组件: (I)</label><div class="combo big">安装板背面<svg class="chev" viewBox="0 0 10 6"><path d="M.5.500 5 5 9.500.5" fill="none" stroke="#555"/></svg></div></div>
        </div>
        <div class="grp">
          <span class="grp-legend">属性</span>
          <div class="cat-row"><span class="cat-label">类别: (C)</span><div class="combo cat">所有类别</div></div>
          <div class="tbl-wrap">
            <table class="props">
              <thead><tr><th>属性名</th><th>数值</th></tr></thead>
              <tbody>
                <tr><td class="focus">组件代号</td><td class="ro">安装面</td></tr>
                <tr><td>组件描述</td><td class="wv"><svg class="globe"><use href="#globe"/></svg></td></tr>
                <tr><td>行业</td><td class="wv">机械</td></tr>
                <tr><td>将组件固定在上一级组件上,不能移动</td><td class="wv"><span class="chk"><svg viewBox="0 0 12 12"><path d="M2 6l3 3.500L10 2" fill="none" stroke="#333"/></svg></span></td></tr>
              </tbody>
            </table>
          </div>
        </div>
      </div>
      <div class="dlg-foot">
        <div class="activate"><div class="a1">激活 Windows</div><div class="a2">转到“设置”以激活 Windows。</div></div>
        <div class="ok">确定</div>
      </div>
    </div>
  </section>

  <div class="mark rect-main"></div>
  <div class="mark rect-combo"></div>
  <div class="corner-tool"><svg viewBox="0 0 16 16"><path d="M1 15 9 7c-1-3 1-5 4-5l-2 2 2 2 2-2c0 3-2 5-5 4l-7 8Z" fill="#999"/></svg></div>
  <div class="watermark">CSDN @平行的时光线</div>
  <svg class="noentry" viewBox="0 0 14 14"><circle cx="7" cy="7" r="7" fill="#cf4a30"/><rect x="2.500" y="5.500" width="9" height="3" fill="#fff"/></svg>
</div>
</body>
</html>
```

FILE: styles.css
```css
* { box-sizing: border-box; }
html, body { margin: 0; padding: 0; height: 100%; overflow: hidden; }
body { font: 12px/1.2 "Liberation Sans", "Noto Sans CJK SC", sans-serif; color: #111; background: #f5f5f5; }
.defs { position: absolute; width: 0; height: 0; }
.app { position: relative; width: 1920px; height: 1040px; overflow: hidden; display: flex; flex-direction: column; }

.titlebar { height: 23px; background: #fff; display: flex; align-items: center; padding-left: 2px; flex: none; }
.title-icon { width: 16px; height: 16px; }
.title-text { margin-left: 5px; color: #8a8a8a; font-size: 12.500px; }
.win-btns { margin-left: auto; display: flex; padding-right: 3px; }
.win-btn { width: 45px; height: 20px; display: flex; align-items: center; justify-content: center; }
.win-btn svg { width: 10px; height: 10px; }

.menubar { height: 23px; flex: none; background: #f5f5f5; display: flex; align-items: center; gap: 16px; padding-left: 17px; font-size: 12px; border-top: 1px solid #eee; }

.toolbars { flex: none; background: #f5f5f5; border-top: 1px solid #aaa; }
.tbrow { height: 28px; display: flex; border-bottom: 1px solid #aaa; }
.tbrow:last-child { border-bottom: 0; height: 27px; }
.tbg { display: flex; align-items: center; border-right: 1px solid #aaa; padding-left: 9px; height: 100%; flex: none; }
.tbg.first { padding-left: 9px; width: 515px; }
.tbg.last { border-right: 0; padding-left: 9px; flex: 1; }
.w292.first { width: 292px; }
.w116 { width: 116px; }
.w131 { width: 131px; padding-left: 9px; }
.w484 { width: 484px; padding-left: 9px; }
.w331.first { width: 331px; }
.w429 { width: 429px; padding-left: 11px; }
.b { width: 24px; height: 25px; flex: none; display: flex; align-items: center; justify-content: center; font-style: normal; }
.b svg { width: 20px; height: 20px; overflow: visible; }
.b.on { background: #cce4f7; box-shadow: inset 0 0 0 1px #99d1ff; }
.s { width: 1px; height: 21px; background: #a8a8a8; margin: 0 3.500px 0 4px; flex: none; }
.gl { font: bold 11px "Liberation Sans", sans-serif; fill: #b5481f; }
.omega { font: bold 22px/1 "Liberation Sans", sans-serif; }
.n128 { width: 17px; height: 14px; font: bold 9px/12px "Liberation Sans", sans-serif; color: #e8a020; border: 1px solid #888; text-align: center; background: #f4f4f4; }

.workspace { position: relative; flex: 1; display: flex; min-height: 0; border-top: 1px solid #aaa; }

.sidebar { width: 300px; flex: none; display: flex; flex-direction: column; background: #f5f5f5; }
.caption { height: 24px; flex: none; display: flex; align-items: center; background: linear-gradient(#c3d3e4, #e1e8f0); padding-left: 4px; }
.caption.second { margin-top: 3px; height: 23px; }
.cap-title { font-size: 13px; flex: 1; padding-bottom: 2px; }
.cap-arrow { width: 0; height: 0; border: 5px solid transparent; border-top: 6px solid #111; border-bottom: 0; }
.cap-pin { width: 14px; height: 14px; margin: 0 6px 0 4px; }
.cap-close { width: 12px; height: 12px; margin-right: 4px; background: #c85050; color: #fff; font: bold 9px/11px "Liberation Sans", sans-serif; text-align: center; }

.side-tabs { height: 28px; flex: none; display: flex; padding-top: 1px; }
.side-tab { font-size: 13px; line-height: 24px; }
.side-tab.dim { color: #999; padding-left: 8px; width: 83px; }
.side-tab.cur { width: 120px; padding-left: 5px; background: #f0f0f0; border-right: 1px solid #000; margin-top: 1px; }

.side-body { height: 495px; flex: none; margin: 0 4px 0 2px; border: 1px solid #aaa; border-top-color: #bbb; padding: 6px 2px 0 3px; display: flex; flex-direction: column; background: #f2f2f2; }
.lbl { display: block; height: 18px; line-height: 18px; font-size: 12px; }
.filter-row { display: flex; margin-top: 4px; padding-right: 2px; }
.combo { position: relative; height: 25px; flex: none; background: #e1e1e1; border: 1px solid #adadad; padding-left: 4px; line-height: 23px; font-size: 12px; }
.filter-row .combo { width: 252px; }
.chev { position: absolute; right: 4px; top: 9px; width: 9px; height: 6px; }
.dots { width: 24px; height: 24px; margin-left: 11px; background: #e1e1e1; border: 1px solid #adadad; text-align: center; line-height: 20px; }
.lbl.val { margin-top: 8px; }
.value-input { height: 23px; margin: 5px 0 0 1px; background: #f0f0f0; border: 1px solid #777; border-top-width: 2px; width: 284px; box-shadow: 0 0 0 1px #fff; }
.tree { height: 346px; margin-top: 10px; background: #fff; border: 1px solid #888; border-bottom-color: #aaa; padding-top: 1px; flex: none; }
.node { position: relative; height: 20.400px; display: flex; align-items: center; padding-left: 23px; font-size: 12px; }
.node.root { padding-left: 23px; }
.node.root b { margin-left: 1px; font-size: 12px; }
.ticon { width: 15px; height: 15px; flex: none; margin-right: 6px; }
.node .ticon { margin-left: 0; }
.node:not(.root) { padding-left: 29px; }
.node:not(.root) .ticon { margin-left: 13px; }
.exp { position: absolute; left: 6px; top: 5px; width: 9px; height: 9px; border: 1px solid #888; background: #f4f4f4; font: 9px/7px "Liberation Sans", sans-serif; text-align: center; color: #333; }
.exp.sub { left: 26px; top: 6px; color: #235; }
.conn { position: absolute; left: 29px; top: -4px; height: 24px; width: 12px; border-left: 1px dotted #777; }
.conn::after { content: ""; position: absolute; left: 0; top: 14px; width: 11px; border-top: 1px dotted #777; }
.conn.end { height: 14px; }
.sel-text { position: relative; }
.node.sel::before { content: ""; position: absolute; left: 60px; right: 1px; top: 0; bottom: 0; background: #e1e1e1; }
.node.sel > * { position: relative; }
.node.sel > .conn, .node.sel > .exp { position: absolute; }
.bottom-tabs { display: flex; height: 26px; margin-left: 0; }
.btab { font-size: 13px; line-height: 24px; }
.btab.cur { width: 26px; text-align: center; border: 1px solid #000; border-top: 0; border-left: 0; height: 25px; }
.btab.dim { color: #999; padding: 0 8px 0 6px; border-right: 1px solid #bbb; height: 18px; line-height: 20px; margin: 3px 0 0 0; }

.preview { flex: 1; margin: 3px 2px 0 1px; background: #fff; border-left: 2px solid #777; border-top: 1px solid #aaa; padding: 4px 4px 5px 4px; border-right: 1px solid #ddd; min-height: 0; }
.preview-view { height: 297px; background: linear-gradient(#fff 2%, #b8b8b8); }
.fill-svg { display: block; width: 100%; height: 100%; }

.doc { flex: 1; min-width: 0; display: flex; flex-direction: column; background: #f5f5f5; }
.doc-tabs { height: 24px; flex: none; padding-left: 8px; }
.doc-tab { width: 98px; height: 24px; margin-top: 1px; background: #b8d0ec; clip-path: polygon(0 100%, 23px 0, 100% 0, 100% 100%); display: flex; align-items: center; padding-left: 28px; }
.doc-tab span { font-weight: bold; font-size: 14px; width: 51px; }
.doc-tab b { width: 16px; height: 16px; background: #c85050; color: #fff; font: bold 9px/15px "Liberation Sans", sans-serif; text-align: center; }
.canvas { flex: 1; margin-left: 5px; border-top: 3px solid #aac4e0; border-left: 3px solid #aac4e0; border-bottom: 3px solid #aac4e0; background: linear-gradient(#fff, #bababa); box-shadow: inset 1px 1px 0 #777; min-height: 0; position: relative; overflow: hidden; }
.canvas-svg { position: absolute; left: 0; top: 0; width: 1612px; height: 856px; shape-rendering: crispEdges; }

.statusbar { height: 23px; flex: none; display: flex; background: #f0f0f0; border-top: 1px solid #ddd; align-items: stretch; }
.st { border-left: 1px solid #d8d8d8; padding: 4px 0 0 4px; font-size: 12px; color: #333; }
.st-coord { width: 928px; border-left: 0; padding-left: 6px; display: flex; font-size: 11.600px; }
.co { width: 85px; }
.st-a { width: 486px; }
.st-b { width: 218px; }
.st-c { width: 126px; }
.st-d { width: 82px; }
.st-e { flex: 1; }

.dialog { position: absolute; left: 1094px; top: 50px; width: 900px; height: 946px; background: #f0f0f0; border: 1px solid #777; border-right: 0; box-shadow: 0 0 14px rgba(0,0,0,.4); display: flex; flex-direction: column; }
.dlg-title { height: 30px; flex: none; background: #fff; display: flex; align-items: center; padding-left: 8px; font-size: 12px; }
.dlg-icon { width: 16px; height: 16px; margin-right: 5px; }
.dlg-body { flex: 1; display: flex; flex-direction: column; min-height: 0; }
.dlg-tabs { display: flex; margin: 24px 0 0 26px; height: 25px; align-items: flex-end; flex: none; }
.dtab { width: 65px; height: 25px; line-height: 23px; text-align: center; border-top: 1px solid #fff; border-left: 1px solid #fff; border-right: 1px solid #000; background: #f0f0f0; }
.dtab + .dtab { width: 34px; height: 21px; line-height: 21px; }
.dlg-page { height: 793px; flex: none; margin-left: 20px; border-top: 1px solid #fff; border-left: 1px solid #fff; border-bottom: 2px solid #222; padding: 27px 0 0 21px; display: flex; flex-direction: column; }
.form { display: grid; grid-template-columns: 517px 300px; column-gap: 18px; row-gap: 11px; flex: none; }
.fld .lbl { margin-bottom: 4px; }
.third { margin-top: 1px; }
.inp { height: 26px; background: #f0f0f0; border: 1px solid #777; box-shadow: inset 0 -1px 0 #fff; padding-left: 4px; line-height: 24px; }
.with-btn { display: flex; }
.grow { flex: 1; margin-right: 3px; }
.mini { width: 23px; height: 24px; margin-top: 1px; background: #e1e1e1; border: 1px solid #adadad; text-align: center; line-height: 18px; font-weight: bold; }
.mini.x { width: 24px; margin-left: 11px; background: #c4c4c4; color: #8a8a8a; line-height: 22px; font-size: 13px; }
.combo.big { height: 24px; line-height: 22px; padding-left: 3px; }
.grp { position: relative; flex: none; height: 549px; margin: 26px 0 0 0; border: 1px solid #dcdcdc; border-right: 0; padding: 22px 0 0 15px; display: flex; flex-direction: column; }
.grp-legend { position: absolute; left: 7px; top: -8px; background: #f0f0f0; padding: 0 1px; }
.cat-row { display: flex; align-items: center; height: 25px; flex: none; }
.cat-label { width: 176px; }
.combo.cat { width: 600px; line-height: 23px; }
.tbl-wrap { flex: none; width: 780px; height: 461px; margin-top: 18px; margin-left: 1px; background: #fff; border-top: 2px solid #777; border-left: 1px solid #777; border-bottom: 1px solid #ddd; }
.props { border-collapse: collapse; table-layout: fixed; width: 746px; font-size: 12px; }
.props th { height: 21px; font-weight: normal; background: #f0f0f0; border-right: 2px solid #333; border-bottom: 2px solid #333; padding: 0; width: 373px; }
.props td { height: 19.800px; padding: 0 0 0 2px; border: 1px solid #808080; border-left: 0; background: #f0f0f0; line-height: 16px; }
.props td.wv { background: #fff; }
.props td.focus { box-shadow: inset 0 0 0 1px #222; }
.globe { width: 15px; height: 15px; display: block; margin-left: 2px; }
.chk { display: block; width: 12px; height: 12px; margin-left: 2px; border: 1px solid #555; background: #fff; }
.chk svg { display: block; width: 10px; height: 10px; }
.dlg-foot { flex: 1; display: flex; padding: 22px 0 0 536px; }
.activate { width: 181px; color: #bbb; }
.a1 { font-size: 21px; line-height: 22px; }
.a2 { font-size: 15px; line-height: 18px; margin-top: 4px; white-space: nowrap; }
.ok { width: 120px; height: 26px; background: #e1e1e1; border: 2px solid #0078d7; text-align: center; line-height: 22px; }

.mark { position: absolute; border: 6px solid #ed1c24; border-radius: 2px; pointer-events: none; }
.rect-main { left: 309px; top: 213px; width: 791px; height: 671px; }
.rect-combo { left: 1114px; top: 267px; width: 567px; height: 83px; }
.corner-tool { position: absolute; left: 1892px; top: 996px; width: 28px; height: 18px; background: #fff; border-left: 1px solid #aaa; padding: 1px 0 0 5px; }
.corner-tool svg { display: block; width: 15px; height: 15px; }
.watermark { position: absolute; left: 1713px; top: 1009px; font-size: 19px; line-height: 22px; color: rgba(95,95,95,.75); white-space: nowrap; }
.noentry { position: absolute; left: 1846px; top: 1024px; width: 14px; height: 14px; }
```
